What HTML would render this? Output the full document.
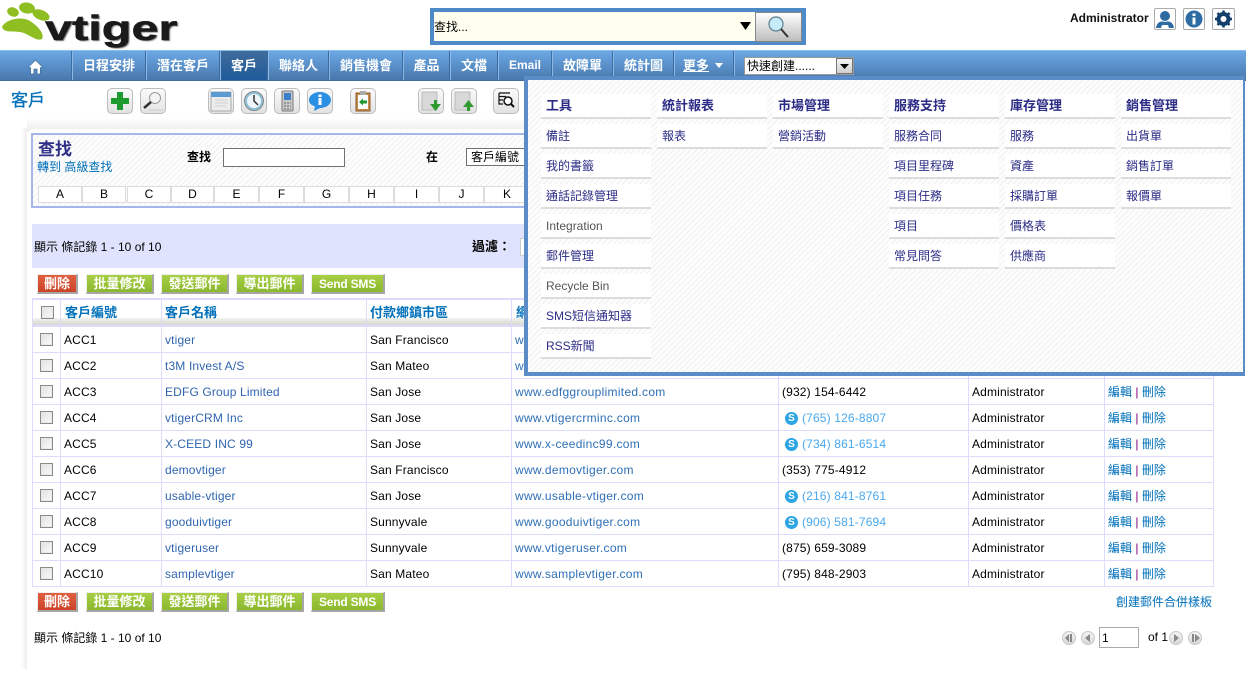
<!DOCTYPE html>
<html><head><meta charset="utf-8"><style>
*{box-sizing:border-box}
html,body{margin:0;padding:0;width:1246px;height:696px;overflow:hidden;background:#fff}
body{position:relative;font:12px "Liberation Sans","WenQuanYi Zen Hei","Noto Sans CJK TC",sans-serif;color:#000}
.t{position:absolute;white-space:nowrap;line-height:14px}
.nav{position:absolute;left:0;top:50px;width:1246px;height:31px;background:linear-gradient(#6ca8e6,#4878ac);border-top:1px solid #8cbcec;border-bottom:1px solid #3f6c9a}
.sep{position:absolute;top:51px;width:2px;height:29px;background:linear-gradient(90deg,#3c6da0 50%,#8cb8e4 50%)}
.n{position:absolute;top:58px;color:#fff;font-weight:bold;font-size:13px;line-height:15px;white-space:nowrap;text-align:center}
.ib{position:absolute;top:88px;width:26px;height:26px;border:1px solid #bdbdbd;border-radius:5px;background:linear-gradient(#fbfbfb,#e2e2e2)}
.ib svg{position:absolute;left:0;top:0}
.hatch{background-color:#fdfdfd;background-image:repeating-linear-gradient(135deg,#f0f0f0 0,#f0f0f0 1px,#fdfdfd 1px,#fdfdfd 4px)}
.btn{position:absolute;height:20px;color:#fff;font-weight:bold;font-size:13px;line-height:18px;text-align:center;border:1px solid #eee;border-right:2px solid #a6a6a6;border-bottom:2px solid #a6a6a6;background:linear-gradient(#a8cf45,#8ab82e);white-space:nowrap}
.btn.r{background:linear-gradient(#e06040,#cc4428)}
.btn.s{font-size:12px;letter-spacing:-.2px}
.hl{position:absolute;background:#dedcfc}
.c{position:absolute;white-space:nowrap;line-height:14px;letter-spacing:.15px}
.h{font-size:13px;font-weight:bold;letter-spacing:0}
.e{letter-spacing:0}
.l{color:#3065b0}.w{color:#2e6fb5;letter-spacing:.3px}.p{color:#4aa8f0}.b{color:#0070ba}
.cb{position:absolute;width:13px;height:13px;border:1px solid #8a8a8a;background:linear-gradient(135deg,#e0e0e0,#fbfbfb);box-shadow:inset 0 0 0 1px #e8e8e8}
.alpha{position:absolute;top:186px;height:17px;background:#fff;border:1px solid #dcdcdc;text-align:center;line-height:15px;font-size:12px}
.mi{position:absolute;width:110px;height:25px;background:#fff;border-bottom:2px solid #dcdcdc;padding-left:5px;color:#2c2c86;line-height:24px;font-size:12px;white-space:nowrap}
.mi.m{font-weight:bold;font-size:13px}
.sk{position:absolute;width:13px;height:13px;border-radius:50%;background:#2ca5e4;color:#fff;font-size:10px;font-weight:bold;line-height:13px;text-align:center}
.pg{position:absolute;top:631px;width:14px;height:14px;border-radius:50%;border:1px solid #c8c8c8;background:linear-gradient(#f4f4f4,#d8d8d8)}
</style></head><body>

<!-- logo -->
<svg style="position:absolute;left:0;top:0" width="60" height="45" viewBox="0 0 60 45">
<ellipse cx="13" cy="12" rx="6" ry="4.500" fill="#8fbe22" transform="rotate(20 13 12)"/>
<ellipse cx="27" cy="8" rx="8" ry="5.500" fill="#8fbe22" transform="rotate(10 27 8)"/>
<ellipse cx="41" cy="15" rx="9" ry="5" fill="#8fbe22" transform="rotate(22 41 15)"/>
<path d="M2 27C6 19 22 16 30 21C38 26 45 34 42 39C36 42 28 33 20 32C12 31 4 33 2 27Z" fill="#8fbe22"/>
</svg>
<div class="t" style="left:45px;top:9px;font-size:35px;line-height:40px;font-weight:bold;color:#1a1a1a;transform:scaleX(1.39);transform-origin:left;-webkit-text-stroke:.5px #1a1a1a;text-shadow:1px 1px 1px #777">vtiger</div>

<!-- search -->
<div style="position:absolute;left:430px;top:8px;width:376px;height:37px;border:4px solid #4f8ac8;background:#fffff0"></div>
<div class="t" style="left:434px;top:20px">查找...</div>
<svg style="position:absolute;left:739px;top:21px" width="13" height="10"><path d="M1 1H12L6.500 9Z" fill="#000"/></svg>
<div style="position:absolute;left:755px;top:12px;width:47px;height:30px;border:1px solid #888;background:linear-gradient(#fff,#bdbdbd)"></div>
<svg style="position:absolute;left:767px;top:14px" width="26" height="26" viewBox="0 0 26 26"><circle cx="9" cy="10" r="7" fill="#c6ecf8" stroke="#5a7f90" stroke-width="1.200"/><path d="M14 15L21 23" stroke="#333" stroke-width="2"/></svg>

<!-- user -->
<div class="t" style="left:1070px;top:11px;font-weight:bold;color:#111">Administrator</div>
<div style="position:absolute;left:1154px;top:8px;width:22px;height:22px;border:1px solid #aaa;border-radius:2px;background:#fff"></div>
<svg style="position:absolute;left:1155px;top:9px" width="20" height="20"><circle cx="10" cy="7" r="5" fill="#2d6ba3"/><path d="M1 19C2 12 7 12 10 13C13 12 18 12 19 19H14L13 16H7L6 19Z" fill="#2d6ba3"/></svg>
<div style="position:absolute;left:1183px;top:8px;width:22px;height:22px;border:1px solid #aaa;border-radius:2px;background:#fff"></div>
<svg style="position:absolute;left:1184px;top:9px" width="20" height="20"><circle cx="10" cy="10" r="8.500" fill="#2d6ba3"/><rect x="8.500" y="8.500" width="3" height="7" fill="#fff"/><rect x="8.500" y="4.500" width="3" height="2.500" fill="#fff"/></svg>
<div style="position:absolute;left:1212px;top:8px;width:23px;height:22px;border:1px solid #aaa;border-radius:2px;background:#fff"></div>
<svg style="position:absolute;left:1213px;top:9px" width="21" height="20"><circle cx="10.500" cy="10" r="5" fill="none" stroke="#123f6b" stroke-width="4"/><path d="M10.500 1.500V18.500M2 10H19M4.500 4L16.500 16M16.500 4L4.500 16" stroke="#123f6b" stroke-width="2.500"/><circle cx="10.500" cy="10" r="3" fill="#fff"/></svg>

<!-- nav -->
<div class="nav"></div>
<div style="position:absolute;left:220px;top:51px;width:47px;height:29px;background:linear-gradient(#3f6c9c,#1f5b9c)"></div>
<svg style="position:absolute;left:27px;top:59px" width="17" height="16" viewBox="0 0 16 15"><path d="M8 1L1 8H3.500V14H6.500V9.500H9.500V14H12.500V8H15Z" fill="#fff" stroke="#3d6c9c" stroke-width=".6"/></svg>
<div class="sep" style="left:71px"></div><div class="sep" style="left:145px"></div><div class="sep" style="left:219px"></div><div class="sep" style="left:267px"></div><div class="sep" style="left:328px"></div><div class="sep" style="left:402px"></div><div class="sep" style="left:449px"></div><div class="sep" style="left:497px"></div><div class="sep" style="left:551px"></div><div class="sep" style="left:612px"></div><div class="sep" style="left:673px"></div><div class="sep" style="left:733px"></div>
<div class="n" style="left:73px;width:72px">日程安排</div>
<div class="n" style="left:147px;width:72px">潛在客戶</div>
<div class="n" style="left:221px;width:46px">客戶</div>
<div class="n" style="left:269px;width:59px">聯絡人</div>
<div class="n" style="left:330px;width:72px">銷售機會</div>
<div class="n" style="left:404px;width:45px">產品</div>
<div class="n" style="left:451px;width:46px">文檔</div>
<div class="n" style="left:499px;width:52px;font-size:12px">Email</div>
<div class="n" style="left:553px;width:59px">故障單</div>
<div class="n" style="left:614px;width:59px">統計圖</div>
<div class="n" style="left:683px;text-decoration:underline">更多</div>
<svg style="position:absolute;left:715px;top:63px" width="8" height="5"><path d="M0 0H8L4 5Z" fill="#fff"/></svg>
<div style="position:absolute;left:744px;top:57px;width:110px;height:18px;background:#fff;border:1px solid #999"></div>
<div class="t" style="left:747px;top:59px">快速創建......</div>
<div style="position:absolute;left:836px;top:58px;width:17px;height:16px;background:linear-gradient(#f4f4f4,#cfcfcf);border:1px solid #777"></div>
<svg style="position:absolute;left:840px;top:64px" width="9" height="5"><path d="M0 0H9L4.500 5Z" fill="#000"/></svg>

<!-- toolbar -->
<div class="t" style="left:11px;top:92px;font-size:17px;line-height:18px;color:#0070ba;-webkit-text-stroke:.3px #0070ba">客戶</div>
<div class="ib" style="left:107px"><svg width="24" height="24"><path d="M9 3H15V9H21V15H15V21H9V15H3V9H9Z" fill="#1f9a2e"/></svg></div>
<div class="ib" style="left:140px"><svg width="24" height="24"><circle cx="14" cy="9" r="5.500" fill="#f4f4f4" stroke="#999"/><path d="M10 13L3 19" stroke="#333" stroke-width="2.500"/><path d="M8 21H22" stroke="#ccc"/></svg></div>
<div class="ib" style="left:208px"><svg width="24" height="24"><rect x="2" y="3" width="20" height="19" fill="#ececec" stroke="#aaa"/><rect x="2" y="3" width="20" height="5" fill="#5b9bd2"/><path d="M6 11H19M6 14H19M6 17H17" stroke="#d0d0d0"/></svg></div>
<div class="ib" style="left:241px"><svg width="24" height="24"><circle cx="12" cy="12" r="9.500" fill="#8ec0d8" stroke="#888"/><circle cx="12" cy="12" r="7" fill="#eef6fa"/><path d="M12 6V12L16 16" stroke="#333" stroke-width="1.500" fill="none"/></svg></div>
<div class="ib" style="left:274px"><svg width="24" height="24"><rect x="7" y="2" width="11" height="20" rx="1" fill="#c8c8c8" stroke="#777"/><rect x="9" y="4" width="7" height="7" fill="#3a7fc8"/><path d="M9 14H16M9 17H16M9 20H16" stroke="#666" stroke-dasharray="2 1"/></svg></div>
<div class="ib" style="left:307px"><svg width="24" height="24"><path d="M12 3C18 3 23 6.500 23 11S18 19 12 19L6 22L7 17.500C3 16 1 14 1 11C1 6.500 6 3 12 3Z" fill="#2b8fe4"/><rect x="10.500" y="9" width="3" height="7" fill="#fff"/><rect x="10.500" y="5.500" width="3" height="2.500" fill="#fff"/></svg></div>
<div class="ib" style="left:350px"><svg width="24" height="24"><rect x="5" y="4" width="14" height="18" fill="#c88a4a" stroke="#8a5a2a"/><rect x="7" y="6" width="10" height="14" fill="#fff"/><rect x="9" y="2" width="6" height="4" fill="#aaa"/><path d="M8 13L12 9.500V11.500H16V14.500H12V16.500Z" fill="#1f9a2e"/></svg></div>
<div class="ib" style="left:418px"><svg width="24" height="24"><rect x="3" y="3" width="15" height="18" fill="#d8d8d8" stroke="#bbb"/><path d="M15 11H18V15H22L16.500 22L11 15H15Z" fill="#2f9a2f"/></svg></div>
<div class="ib" style="left:451px"><svg width="24" height="24"><rect x="3" y="3" width="15" height="18" fill="#d8d8d8" stroke="#bbb"/><path d="M15 22H18V18H22L16.500 11L11 18H15Z" fill="#2f9a2f"/></svg></div>
<div class="ib" style="left:493px"><svg width="24" height="24"><path d="M5 4H16M5 4V15H9M5 7.500H12M5 11H9" stroke="#111" stroke-width="1.200" fill="none"/><circle cx="14" cy="12" r="4" fill="#fff" stroke="#111" stroke-width="1.500"/><path d="M17 15L20 18" stroke="#111" stroke-width="2"/></svg></div>

<!-- panel -->
<div style="position:absolute;left:27px;top:118px;width:1219px;height:14px;background:linear-gradient(#fff,#ebebeb)"></div>
<div style="position:absolute;left:21px;top:128px;width:6px;height:541px;background:linear-gradient(90deg,#fff,#eee)"></div>
<div style="position:absolute;left:27px;top:129px;width:1219px;height:560px;background:#fff;border-radius:7px 0 0 0"></div>

<!-- search panel -->
<div class="hatch" style="position:absolute;left:31px;top:133px;width:500px;height:75px;border:2px solid #a4b6ea"></div>
<div class="t" style="left:38px;top:141px;font-size:17px;line-height:17px;font-weight:bold;color:#2f2f88">查找</div>
<div class="t b" style="left:37px;top:160px">轉到 高級查找</div>
<div class="t" style="left:187px;top:150px;font-weight:bold">查找</div>
<div style="position:absolute;left:223px;top:148px;width:122px;height:19px;background:#fff;border:1px solid #707070"></div>
<div class="t" style="left:426px;top:150px;font-weight:bold">在</div>
<div style="position:absolute;left:466px;top:148px;width:66px;height:18px;background:#fff;border:1px solid #707070"></div>
<div class="t" style="left:471px;top:150px">客戶編號</div>
<div class="alpha" style="left:38px;width:44px">A</div><div class="alpha" style="left:82px;width:44px">B</div><div class="alpha" style="left:127px;width:44px">C</div><div class="alpha" style="left:171px;width:43px">D</div><div class="alpha" style="left:214px;width:45px">E</div><div class="alpha" style="left:259px;width:45px">F</div><div class="alpha" style="left:304px;width:45px">G</div><div class="alpha" style="left:349px;width:45px">H</div><div class="alpha" style="left:394px;width:45px">I</div><div class="alpha" style="left:439px;width:45px">J</div><div class="alpha" style="left:484px;width:46px">K</div>

<!-- bar -->
<div style="position:absolute;left:32px;top:224px;width:500px;height:44px;background:#e0e3fd"></div>
<div class="t" style="left:34px;top:240px">顯示 條記錄 1 - 10 of 10</div>
<div class="t" style="left:472px;top:240px;font-size:13px;font-weight:bold">過濾：</div>
<div style="position:absolute;left:520px;top:238px;width:10px;height:18px;background:#fff;border:1px solid #ccc"></div>

<!-- buttons -->
<div class="btn r" style="left:37px;top:274px;width:41px">刪除</div>
<div class="btn" style="left:86px;top:274px;width:68px">批量修改</div>
<div class="btn" style="left:161px;top:274px;width:68px">發送郵件</div>
<div class="btn" style="left:236px;top:274px;width:68px">導出郵件</div>
<div class="btn s" style="left:311px;top:274px;width:74px">Send SMS</div>
<div class="btn r" style="left:37px;top:592px;width:41px">刪除</div>
<div class="btn" style="left:86px;top:592px;width:68px">批量修改</div>
<div class="btn" style="left:161px;top:592px;width:68px">發送郵件</div>
<div class="btn" style="left:236px;top:592px;width:68px">導出郵件</div>
<div class="btn s" style="left:311px;top:592px;width:74px">Send SMS</div>

<!-- table lines -->
<div style="position:absolute;left:33px;top:318px;width:1180px;height:8px;background:linear-gradient(#f2f2ee,#d4d4ce)"></div>
<div class="hl" style="left:32px;top:298px;width:1182px;height:2px"></div>
<div class="hl" style="left:32px;top:325px;width:1182px;height:2px"></div>
<div class="hl" style="left:32px;top:352px;width:1182px;height:1px"></div>
<div class="hl" style="left:32px;top:378px;width:1182px;height:1px"></div>
<div class="hl" style="left:32px;top:404px;width:1182px;height:1px"></div>
<div class="hl" style="left:32px;top:430px;width:1182px;height:1px"></div>
<div class="hl" style="left:32px;top:456px;width:1182px;height:1px"></div>
<div class="hl" style="left:32px;top:482px;width:1182px;height:1px"></div>
<div class="hl" style="left:32px;top:508px;width:1182px;height:1px"></div>
<div class="hl" style="left:32px;top:534px;width:1182px;height:1px"></div>
<div class="hl" style="left:32px;top:560px;width:1182px;height:1px"></div>
<div class="hl" style="left:32px;top:586px;width:1182px;height:1px"></div>
<div class="hl" style="left:32px;top:298px;width:1px;height:289px"></div>
<div class="hl" style="left:60px;top:298px;width:1px;height:289px"></div>
<div class="hl" style="left:161px;top:298px;width:1px;height:289px"></div>
<div class="hl" style="left:366px;top:298px;width:1px;height:289px"></div>
<div class="hl" style="left:511px;top:298px;width:1px;height:289px"></div>
<div class="hl" style="left:778px;top:298px;width:1px;height:289px"></div>
<div class="hl" style="left:968px;top:298px;width:1px;height:289px"></div>
<div class="hl" style="left:1104px;top:298px;width:1px;height:289px"></div>
<div class="hl" style="left:1213px;top:298px;width:1px;height:289px"></div>

<!-- header -->
<div class="cb" style="left:41px;top:306px"></div>
<div class="c b h" style="left:65px;top:306px">客戶編號</div>
<div class="c b h" style="left:165px;top:306px">客戶名稱</div>
<div class="c b h" style="left:370px;top:306px">付款鄉鎮市區</div>
<div class="c b h" style="left:516px;top:306px">網站</div>

<!-- rows -->
<div class="cb" style="left:40px;top:333px"></div><div class="c" style="left:64px;top:333px">ACC1</div><div class="c l" style="left:165px;top:333px">vtiger</div><div class="c" style="left:370px;top:333px">San Francisco</div><div class="c w" style="left:515px;top:333px">www.vtiger.com</div>
<div class="cb" style="left:40px;top:359px"></div><div class="c" style="left:64px;top:359px">ACC2</div><div class="c l" style="left:165px;top:359px">t3M Invest A/S</div><div class="c" style="left:370px;top:359px">San Mateo</div><div class="c w" style="left:515px;top:359px">www.t3minvest.com</div>

<div class="cb" style="left:40px;top:385px"></div><div class="c" style="left:64px;top:385px">ACC3</div><div class="c l" style="left:165px;top:385px">EDFG Group Limited</div><div class="c" style="left:370px;top:385px">San Jose</div><div class="c w" style="left:515px;top:385px">www.edfggrouplimited.com</div><div class="c" style="left:782px;top:385px">(932) 154-6442</div><div class="c" style="left:972px;top:385px">Administrator</div><div class="c e" style="left:1108px;top:385px"><span class="b">編輯</span> <span style="color:#800080">|</span> <span class="b">刪除</span></div>

<div class="cb" style="left:40px;top:411px"></div><div class="c" style="left:64px;top:411px">ACC4</div><div class="c l" style="left:165px;top:411px">vtigerCRM Inc</div><div class="c" style="left:370px;top:411px">San Jose</div><div class="c w" style="left:515px;top:411px">www.vtigercrminc.com</div><div class="sk" style="left:785px;top:412px">S</div><div class="c p" style="left:802px;top:411px">(765) 126-8807</div><div class="c" style="left:972px;top:411px">Administrator</div><div class="c e" style="left:1108px;top:411px"><span class="b">編輯</span> <span style="color:#800080">|</span> <span class="b">刪除</span></div>

<div class="cb" style="left:40px;top:437px"></div><div class="c" style="left:64px;top:437px">ACC5</div><div class="c l" style="left:165px;top:437px">X-CEED INC 99</div><div class="c" style="left:370px;top:437px">San Jose</div><div class="c w" style="left:515px;top:437px">www.x-ceedinc99.com</div><div class="sk" style="left:785px;top:438px">S</div><div class="c p" style="left:802px;top:437px">(734) 861-6514</div><div class="c" style="left:972px;top:437px">Administrator</div><div class="c e" style="left:1108px;top:437px"><span class="b">編輯</span> <span style="color:#800080">|</span> <span class="b">刪除</span></div>

<div class="cb" style="left:40px;top:463px"></div><div class="c" style="left:64px;top:463px">ACC6</div><div class="c l" style="left:165px;top:463px">demovtiger</div><div class="c" style="left:370px;top:463px">San Francisco</div><div class="c w" style="left:515px;top:463px">www.demovtiger.com</div><div class="c" style="left:782px;top:463px">(353) 775-4912</div><div class="c" style="left:972px;top:463px">Administrator</div><div class="c e" style="left:1108px;top:463px"><span class="b">編輯</span> <span style="color:#800080">|</span> <span class="b">刪除</span></div>

<div class="cb" style="left:40px;top:489px"></div><div class="c" style="left:64px;top:489px">ACC7</div><div class="c l" style="left:165px;top:489px">usable-vtiger</div><div class="c" style="left:370px;top:489px">San Jose</div><div class="c w" style="left:515px;top:489px">www.usable-vtiger.com</div><div class="sk" style="left:785px;top:490px">S</div><div class="c p" style="left:802px;top:489px">(216) 841-8761</div><div class="c" style="left:972px;top:489px">Administrator</div><div class="c e" style="left:1108px;top:489px"><span class="b">編輯</span> <span style="color:#800080">|</span> <span class="b">刪除</span></div>

<div class="cb" style="left:40px;top:515px"></div><div class="c" style="left:64px;top:515px">ACC8</div><div class="c l" style="left:165px;top:515px">gooduivtiger</div><div class="c" style="left:370px;top:515px">Sunnyvale</div><div class="c w" style="left:515px;top:515px">www.gooduivtiger.com</div><div class="sk" style="left:785px;top:516px">S</div><div class="c p" style="left:802px;top:515px">(906) 581-7694</div><div class="c" style="left:972px;top:515px">Administrator</div><div class="c e" style="left:1108px;top:515px"><span class="b">編輯</span> <span style="color:#800080">|</span> <span class="b">刪除</span></div>

<div class="cb" style="left:40px;top:541px"></div><div class="c" style="left:64px;top:541px">ACC9</div><div class="c l" style="left:165px;top:541px">vtigeruser</div><div class="c" style="left:370px;top:541px">Sunnyvale</div><div class="c w" style="left:515px;top:541px">www.vtigeruser.com</div><div class="c" style="left:782px;top:541px">(875) 659-3089</div><div class="c" style="left:972px;top:541px">Administrator</div><div class="c e" style="left:1108px;top:541px"><span class="b">編輯</span> <span style="color:#800080">|</span> <span class="b">刪除</span></div>

<div class="cb" style="left:40px;top:567px"></div><div class="c" style="left:64px;top:567px">ACC10</div><div class="c l" style="left:165px;top:567px">samplevtiger</div><div class="c" style="left:370px;top:567px">San Mateo</div><div class="c w" style="left:515px;top:567px">www.samplevtiger.com</div><div class="c" style="left:782px;top:567px">(795) 848-2903</div><div class="c" style="left:972px;top:567px">Administrator</div><div class="c e" style="left:1108px;top:567px"><span class="b">編輯</span> <span style="color:#800080">|</span> <span class="b">刪除</span></div>

<!-- footer -->
<div class="t b" style="left:1116px;top:595px">創建郵件合併樣板</div>
<div class="t" style="left:34px;top:631px">顯示 條記錄 1 - 10 of 10</div>
<div class="pg" style="left:1062px"></div><svg style="position:absolute;left:1065px;top:634px" width="8" height="8"><path d="M4 0V8L0 4ZM5 0H7V8H5Z" fill="#888"/></svg>
<div class="pg" style="left:1081px"></div><svg style="position:absolute;left:1085px;top:634px" width="6" height="8"><path d="M5 0V8L0 4Z" fill="#888"/></svg>
<div style="position:absolute;left:1099px;top:627px;width:40px;height:21px;border:1px solid #aaa;background:#fff"></div>
<div class="t" style="left:1102px;top:631px">1</div>
<div class="t" style="left:1148px;top:630px">of 1</div>
<div class="pg" style="left:1169px"></div><svg style="position:absolute;left:1174px;top:634px" width="6" height="8"><path d="M0 0V8L5 4Z" fill="#888"/></svg>
<div class="pg" style="left:1188px"></div><svg style="position:absolute;left:1192px;top:634px" width="8" height="8"><path d="M0 0H2V8H0ZM3 0V8L8 4Z" fill="#888"/></svg>

<!-- overlay menu -->
<div class="hatch" style="position:absolute;left:524px;top:76px;width:721px;height:300px;border:4px solid #5a8cc8;border-right-width:2px"></div>
<div class="mi m" style="left:541px;top:94px">工具</div>
<div class="mi" style="left:541px;top:124px">備註</div>
<div class="mi" style="left:541px;top:154px">我的書籤</div>
<div class="mi" style="left:541px;top:184px">通話記錄管理</div>
<div class="mi" style="left:541px;top:214px;color:#555">Integration</div>
<div class="mi" style="left:541px;top:244px">郵件管理</div>
<div class="mi" style="left:541px;top:274px;color:#555">Recycle Bin</div>
<div class="mi" style="left:541px;top:304px">SMS短信通知器</div>
<div class="mi" style="left:541px;top:334px">RSS新聞</div>
<div class="mi m" style="left:657px;top:94px">統計報表</div>
<div class="mi" style="left:657px;top:124px">報表</div>
<div class="mi m" style="left:773px;top:94px">市場管理</div>
<div class="mi" style="left:773px;top:124px">營銷活動</div>
<div class="mi m" style="left:889px;top:94px">服務支持</div>
<div class="mi" style="left:889px;top:124px">服務合同</div>
<div class="mi" style="left:889px;top:154px">項目里程碑</div>
<div class="mi" style="left:889px;top:184px">項目任務</div>
<div class="mi" style="left:889px;top:214px">項目</div>
<div class="mi" style="left:889px;top:244px">常見問答</div>
<div class="mi m" style="left:1005px;top:94px">庫存管理</div>
<div class="mi" style="left:1005px;top:124px">服務</div>
<div class="mi" style="left:1005px;top:154px">資產</div>
<div class="mi" style="left:1005px;top:184px">採購訂單</div>
<div class="mi" style="left:1005px;top:214px">價格表</div>
<div class="mi" style="left:1005px;top:244px">供應商</div>
<div class="mi m" style="left:1121px;top:94px">銷售管理</div>
<div class="mi" style="left:1121px;top:124px">出貨單</div>
<div class="mi" style="left:1121px;top:154px">銷售訂單</div>
<div class="mi" style="left:1121px;top:184px">報價單</div>

</body></html>
